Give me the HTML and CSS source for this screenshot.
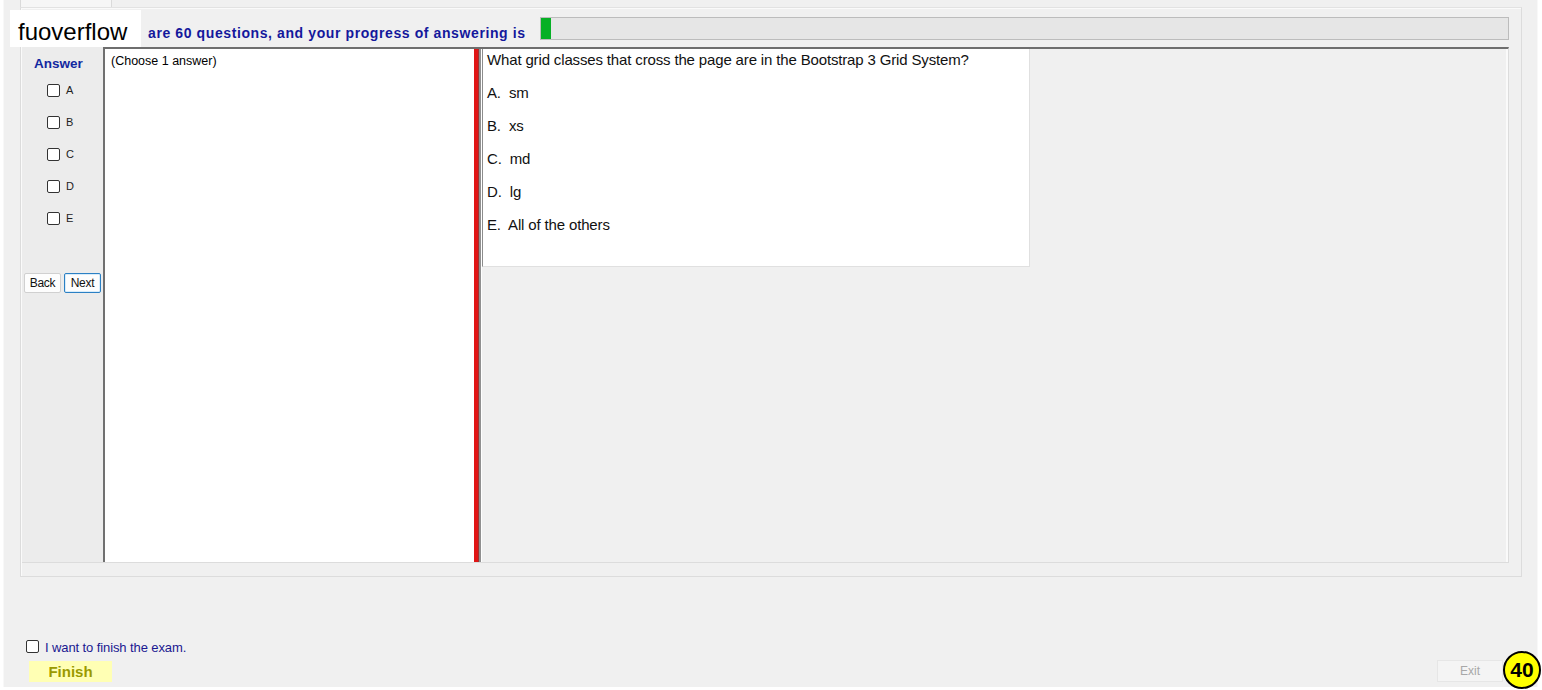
FILE: index.html
```html
<!DOCTYPE html>
<html lang="en">
<head>
    <meta charset="UTF-8">
    <meta name="viewport" content="width=device-width, initial-scale=1.0">
    <title>Exam</title>
    <link rel="stylesheet" href="styles.css">
</head>
<body>
    <div class="window">
        <div class="tabs"><div class="tab"></div></div>

        <div class="tab-panel">
            <div class="status-row">
                <span class="status-text">are 60 questions, and your progress of answering is</span>
                <div class="progress"><div class="progress-fill" style="width: 10px"></div></div>
            </div>

            <div class="main">
                <div class="answer-col">
                    <div class="answer-title">Answer</div>
                    <label class="opt"><input type="checkbox"><span>A</span></label>
                    <label class="opt"><input type="checkbox"><span>B</span></label>
                    <label class="opt"><input type="checkbox"><span>C</span></label>
                    <label class="opt"><input type="checkbox"><span>D</span></label>
                    <label class="opt"><input type="checkbox"><span>E</span></label>
                    <div class="nav-buttons">
                        <button class="btn">Back</button>
                        <button class="btn focused">Next</button>
                    </div>
                </div>

                <div class="note-box">(Choose 1 answer)</div>

                <div class="splitter"></div>

                <div class="question-pane">
                    <div class="question-box">
                        <p class="q-title">What grid classes that cross the page are in the Bootstrap 3 Grid System?</p>
                        <p>A.&nbsp; sm</p>
                        <p>B.&nbsp; xs</p>
                        <p>C.&nbsp; md</p>
                        <p>D.&nbsp; lg</p>
                        <p>E.&nbsp; All of the others</p>
                    </div>
                </div>
            </div>
        </div>

        <div class="footer">
            <div class="finish-side">
                <label class="finish-check"><input type="checkbox"><span>I want to finish the exam.</span></label>
                <button class="finish-btn">Finish</button>
            </div>
            <button class="exit-btn" disabled>Exit</button>
        </div>
    </div>

    <div class="watermark">fuoverflow</div>
    <div class="badge">40</div>
</body>
</html>
```

FILE: styles.css
```css
body {
    margin: 0;
    background-color: #ffffff;
    font-family: "Liberation Sans", Arial, sans-serif;
    color: #000;
}
.window {
    width: 1535px;
    height: 687px;
    margin-left: 3px;
    background-color: #f0f0f0;
    border-left: 1px solid #f8f8f8;
    border-right: 1px solid #f8f8f8;
    box-sizing: border-box;
    display: flex;
    flex-direction: column;
}
.tabs {
    height: 7px;
    padding-left: 16px;
}
.tab {
    width: 90px;
    height: 7px;
    background-color: #f6f6f6;
    border-left: 1px solid #dadada;
    border-right: 1px solid #dadada;
}
.tab-panel {
    margin-left: 16px;
    width: 1502px;
    height: 570px;
    box-sizing: border-box;
    border: 1px solid #dcdcdc;
    border-top-color: #e2e2e2;
    box-shadow: inset 1px 1px 0 #fafafa;
    padding: 2px 12px 0 1px;
}
.status-row {
    height: 37px;
    display: flex;
    align-items: flex-start;
}
.status-text {
    font-size: 14px;
    letter-spacing: 0.6px;
    font-weight: bold;
    color: #14189c;
    margin-left: 126px;
    margin-top: 15px;
    white-space: nowrap;
}
.progress {
    flex: 1;
    height: 23px;
    margin-top: 7px;
    margin-left: 14px;
    background-color: #e6e6e6;
    border: 1px solid #bcbcbc;
    box-sizing: border-box;
}
.progress-fill {
    height: 100%;
    background-color: #06b025;
}
.main {
    height: 515px;
    display: flex;
    border-bottom: 1px solid #dcdcdc;
}
.answer-col {
    width: 81px;
    background-color: #ececec;
    display: flex;
    flex-direction: column;
    align-items: flex-start;
}
.answer-title {
    font-size: 13.5px;
    font-weight: bold;
    color: #1228a0;
    margin: 9px 0 3px 12px;
}
.opt {
    display: flex;
    align-items: center;
    height: 32px;
    margin-left: 25px;
    font-size: 11px;
    color: #222;
}
.opt input,
.finish-check input {
    appearance: none;
    width: 13px;
    height: 13px;
    margin: 0 6px 0 0;
    border: 1px solid #333;
    border-radius: 2px;
    background-color: #fff;
}
.nav-buttons {
    display: flex;
    gap: 3px;
    margin: 39px 0 0 2px;
}
.btn {
    width: 37px;
    height: 20px;
    padding: 0;
    font-family: "Liberation Sans", Arial, sans-serif;
    font-size: 12px;
    letter-spacing: -0.3px;
    background-color: #fdfdfd;
    border: 1px solid #d0d0d0;
    border-radius: 2px;
    color: #111;
}
.btn.focused {
    border-color: #2b80c4;
    box-shadow: inset 0 0 0 1px #d8ecfa;
}
.note-box {
    width: 371px;
    background-color: #fff;
    border-top: 2px solid #6e6e6e;
    border-left: 2px solid #707070;
    box-sizing: border-box;
    padding: 5px 0 0 6px;
    font-size: 12.5px;
}
.splitter {
    width: 8px;
    border-top: 2px solid #6e6e6e;
    background: linear-gradient(to right, #e01515 0, #e01515 4px, #a03030 4px, #a03030 5px, #909090 5px, #909090 7px, #ffffff 7px);
}
.question-pane {
    flex: 1;
    border-top: 2px solid #6e6e6e;
    border-right: 1px solid #dcdcdc;
    box-shadow: inset -2px 0 0 #fafafa;
}
.question-box {
    width: 548px;
    height: 218px;
    box-sizing: border-box;
    background-color: #fff;
    border-left: 1px solid #8c8c8c;
    border-right: 1px solid #e0e0e0;
    border-bottom: 1px solid #e0e0e0;
    padding: 0 0 0 4px;
    font-size: 15px;
    letter-spacing: -0.15px;
    color: #111;
}
.question-box p {
    margin: 0;
    line-height: 33px;
}
.question-box .q-title {
    line-height: 22px;
    margin-bottom: 5px;
}
.footer {
    flex: 1;
    display: flex;
    justify-content: space-between;
    align-items: flex-end;
    padding: 0 34px 5px 22px;
}
.finish-side {
    display: flex;
    flex-direction: column;
    align-items: flex-start;
}
.finish-check {
    display: flex;
    align-items: center;
    font-size: 13px;
    color: #1a1890;
    letter-spacing: -0.1px;
}
.finish-check input {
    margin-right: 6px;
    margin-top: -3px;
}
.finish-btn {
    margin: 6px 0 0 3px;
    width: 83px;
    height: 21px;
    padding: 0;
    border: none;
    background-color: #ffffb4;
    font-family: "Liberation Sans", Arial, sans-serif;
    font-size: 15px;
    font-weight: bold;
    color: #9a9a00;
}
.exit-btn {
    width: 66px;
    height: 22px;
    padding: 0;
    border: 1px solid #e6e6e6;
    background-color: #f4f4f4;
    font-family: "Liberation Sans", Arial, sans-serif;
    font-size: 12px;
    color: #a8a8a8;
}
.watermark {
    position: absolute;
    left: 10px;
    top: 10px;
    width: 131px;
    height: 37px;
    background-color: #fff;
    font-size: 24px;
    line-height: 37px;
    padding: 3px 0 0 8px;
    box-sizing: border-box;
    color: #000;
}
.badge {
    position: absolute;
    left: 1503px;
    top: 651px;
    width: 38px;
    height: 38px;
    box-sizing: border-box;
    border: 2px solid #000;
    border-radius: 50%;
    background-color: #ffff00;
    font-size: 21px;
    font-weight: bold;
    line-height: 34px;
    text-align: center;
}
```
